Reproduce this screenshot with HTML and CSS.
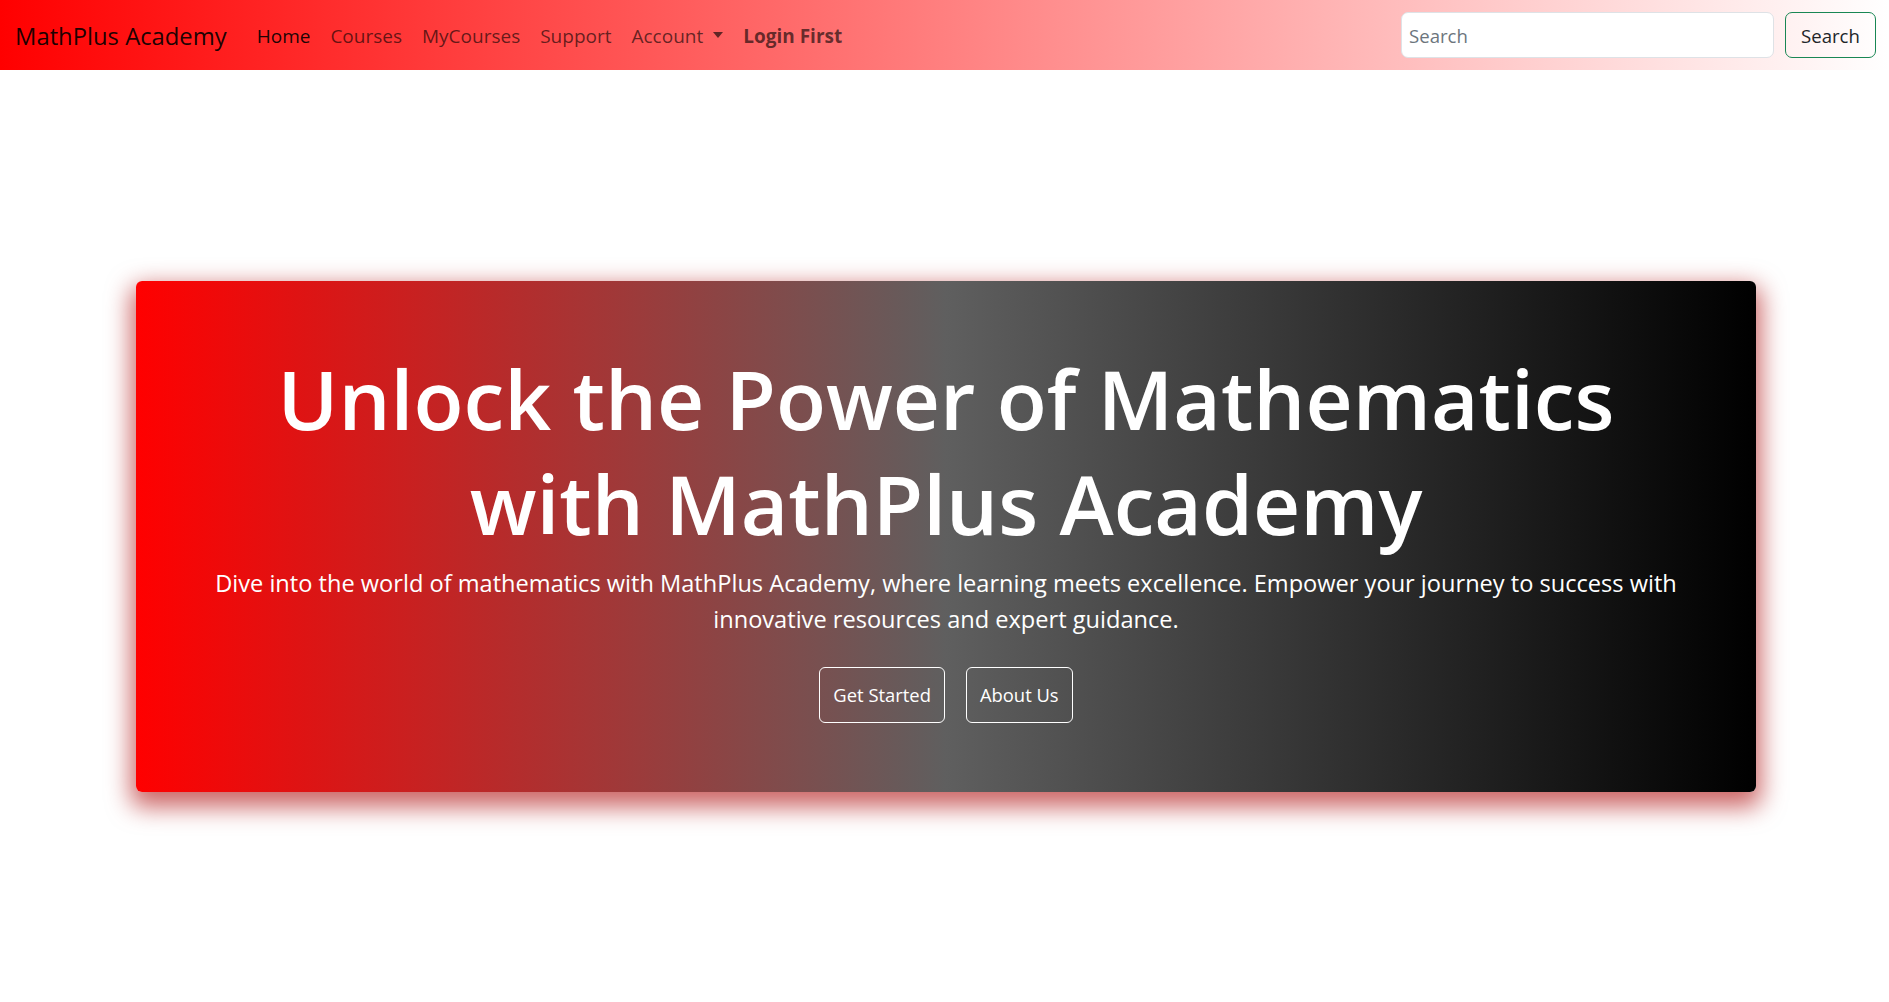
FILE: index.html
```html
<!DOCTYPE html>
<html lang="en">
<head>
<meta charset="utf-8">
<title>MathPlus Academy</title>
<link rel="stylesheet" href="styles.css">
</head>
<body>
<nav class="navbar">
  <a class="brand" href="#">MathPlus Academy</a>
  <ul class="nav">
    <li><a class="nav-link active" href="#">Home</a></li>
    <li><a class="nav-link" href="#">Courses</a></li>
    <li><a class="nav-link" href="#">MyCourses</a></li>
    <li><a class="nav-link" href="#">Support</a></li>
    <li><a class="nav-link dropdown-toggle" href="#">Account</a></li>
    <li><a class="nav-link strong" href="#">Login First</a></li>
  </ul>
  <form class="search">
    <input class="search-input" type="search" placeholder="Search">
    <button class="search-btn" type="button">Search</button>
  </form>
</nav>
<main class="stage">
  <section class="hero">
    <h1 class="hero-title">Unlock the Power of Mathematics with MathPlus Academy</h1>
    <p class="hero-text">Dive into the world of mathematics with MathPlus Academy, where learning meets excellence. Empower your journey to success with innovative resources and expert guidance.</p>
    <div class="hero-actions">
      <a class="btn" href="#">Get Started</a>
      <a class="btn" href="#">About Us</a>
    </div>
  </section>
</main>
</body>
</html>
```

FILE: styles.css
```css
* { box-sizing: border-box; }
html, body { margin: 0; padding: 0; }
body {
  font-family: "Open Sans", "Noto Sans", sans-serif;
  color: #212529;
  background: #fff;
}
a { text-decoration: none; }

.navbar {
  height: 70px;
  display: flex;
  align-items: center;
  padding: 0 13px 0 15px;
  background: linear-gradient(to right, #ff0000, #ffffff);
}
.brand {
  padding-top: 2px;
  font-size: 23.8px;
  color: rgba(0, 0, 0, 0.9);
  margin-right: 20px;
}
.nav {
  list-style: none;
  margin: 0;
  padding: 2px 0 0;
  display: flex;
  flex: 1;
}
.nav-link {
  display: block;
  padding: 8px 10px;
  font-size: 19px;
  color: rgba(0, 0, 0, 0.62);
}
.nav-link.active { color: rgba(0, 0, 0, 0.9); }
.nav-link.strong { font-weight: 700; }
.dropdown-toggle::after {
  content: "";
  display: inline-block;
  margin-left: 10px;
  vertical-align: 5px;
  border-top: 6px solid;
  border-left: 5px solid transparent;
  border-right: 5px solid transparent;
}
.search {
  display: flex;
  gap: 11px;
}
.search-input {
  width: 373px;
  height: 46px;
  padding: 0 7px;
  font: inherit;
  font-size: 18.6px;
  color: #212529;
  background: #fff;
  border: 1px solid #dee2e6;
  border-radius: 7px;
}
.search-input::placeholder { color: #6c757d; }
.search-btn {
  height: 46px;
  width: 91px;
  padding: 0;
  font: inherit;
  font-size: 18.6px;
  color: #212529;
  background: transparent;
  border: 1px solid #198754;
  border-radius: 7px;
}

.stage {
  height: calc(100vh - 70px);
  display: flex;
  align-items: center;
  padding: 0 133px 0 136px;
}
.hero {
  flex: 1;
  height: 511px;
  padding: 65px 60px 0;
  text-align: center;
  color: #fff;
  border-radius: 6px;
  background: linear-gradient(to right, #ff0000, #5f5f5f, #000000);
  box-shadow: 0 10px 25px 5px rgba(170, 0, 0, 0.6);
}
.hero-title {
  margin: 0 0 8px;
  font-size: 82px;
  font-weight: 600;
  line-height: 105.6px;
}
.hero-text {
  margin: 0 0 30px;
  font-size: 23.6px;
  line-height: 36px;
}
.hero-actions {
  display: flex;
  justify-content: center;
  gap: 21px;
}
.btn {
  display: inline-block;
  padding: 12px 13px;
  font-size: 18.4px;
  line-height: 30px;
  color: #fff;
  border: 1px solid #fff;
  border-radius: 6px;
}
```
